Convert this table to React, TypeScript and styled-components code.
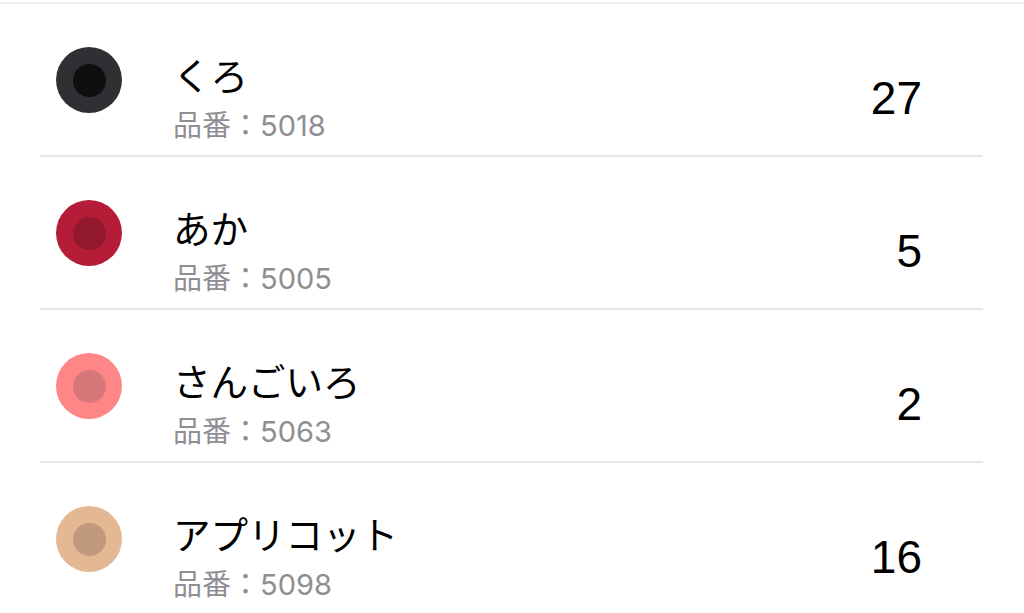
import React from "react";
import styled, { createGlobalStyle } from "styled-components";

const Global = createGlobalStyle`
  html, body { margin: 0; padding: 0; background: #ffffff; }
  body { font-family: Inter, "Noto Sans CJK JP", sans-serif; -webkit-font-smoothing: antialiased; }
`;

const Page = styled.div`
  width: 1024px;
  height: 613px;
  overflow: hidden;
  background: #ffffff;
  padding-top: 2px;
  box-sizing: border-box;
`;

const TopRule = styled.div`
  height: 2px;
  background: #efeff2;
`;

const List = styled.ul`
  list-style: none;
  margin: 0 0 0 40px;
  padding: 0;
  width: 943px;
`;

const Row = styled.li`
  display: flex;
  align-items: flex-start;
  height: 151px;
  padding-left: 16px;
  padding-right: 63px;
  border-bottom: 2px solid #e6e6e8;
`;

const Swatch = styled.div<{ $outer: string; $inner: string }>`
  width: 66px;
  height: 66px;
  flex: 0 0 66px;
  margin-top: 43px;
  border-radius: 50%;
  background: ${(p) => p.$outer};
  display: flex;
  align-items: center;
  justify-content: center;
  &::after {
    content: "";
    width: 33px;
    height: 33px;
    border-radius: 50%;
    background: ${(p) => p.$inner};
  }
`;

const Text = styled.div`
  display: flex;
  flex-direction: column;
  margin-left: 51px;
  margin-top: 48px;
  flex: 1;
`;

const Title = styled.div`
  font-family: "Noto Sans CJK JP", sans-serif;
  font-size: 37.5px;
  line-height: 44px;
  color: #000000;
`;

const Sub = styled.div`
  font-family: Inter, "Noto Sans CJK JP", sans-serif;
  font-size: 29px;
  line-height: 36px;
  margin-top: 12px;
  color: #8e8e93;
`;

const Count = styled.div`
  font-family: "Liberation Sans", Arial, sans-serif;
  font-size: 46px;
  line-height: 52px;
  margin-top: 68px;
  margin-right: -2px;
  color: #000000;
  text-align: right;
`;

const items = [
  { name: "くろ", code: "5018", count: 27, outer: "#2f3034", inner: "#0e0e0f" },
  { name: "あか", code: "5005", count: 5, outer: "#b51c37", inner: "#931a2d" },
  { name: "さんごいろ", code: "5063", count: 2, outer: "#fe8686", inner: "#d8777a" },
  { name: "アプリコット", code: "5098", count: 16, outer: "#e4b892", inner: "#c0987c" },
];

export default function App() {
  return (
    <Page>
      <Global />
      <TopRule />
      <List>
        {items.map((it) => (
          <Row key={it.code}>
            <Swatch $outer={it.outer} $inner={it.inner} />
            <Text>
              <Title>{it.name}</Title>
              <Sub>品番：{it.code}</Sub>
            </Text>
            <Count>{it.count}</Count>
          </Row>
        ))}
      </List>
    </Page>
  );
}
